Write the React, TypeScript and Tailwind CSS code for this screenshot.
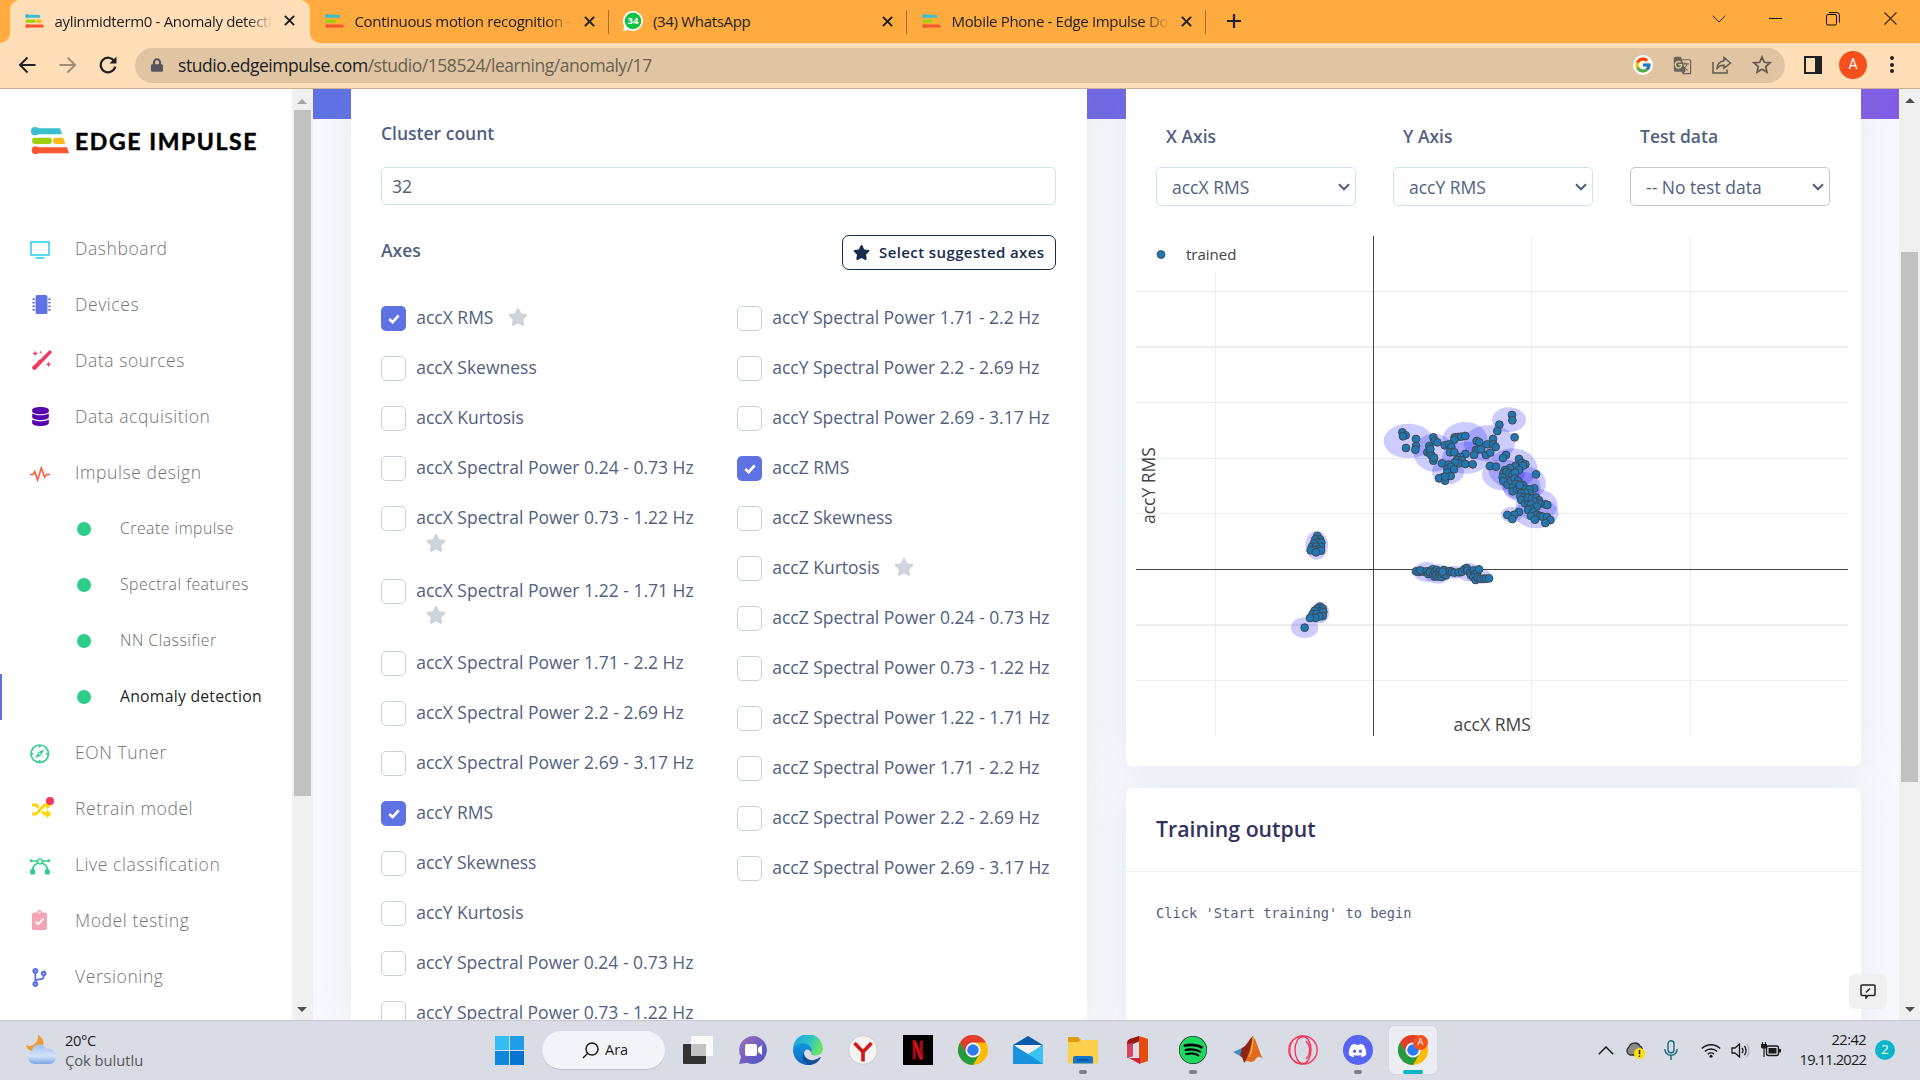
import React from "react";
import {
  FaMicrochip, FaDatabase, FaRandom, FaCodeBranch, FaStar, FaSpotify, FaDiscord, FaLock,
} from "react-icons/fa";
import { MdGTranslate } from "react-icons/md";
import { FcGoogle } from "react-icons/fc";

const Logo = ({ className }: { className: string }) => (
  <svg viewBox="0 0 38 26" className={className} preserveAspectRatio="none">
    <path d="M4 0C6 0 7 1.2 8 1.2H29L31 7H8C7 7 6 8 4 8A4 4 0 0 1 4 0Z" fill="#3bbfd0" />
    <rect x="1" y="10.3" width="20" height="6" rx="3" fill="#9fd00c" />
    <path d="M25 10.3H32L34.5 16.3H25A3 3 0 0 1 25 10.3Z" fill="#fdb913" />
    <path d="M4 18.5C6 18.5 7 19.5 8 19.5H36L38 25.3H8C7 25.3 6 26.2 4 26.2A3.9 3.9 0 0 1 4 18.5Z" fill="#fb5530" />
  </svg>
);

const Close = () => (
  <svg viewBox="0 0 10 10" className="size-[11px] shrink-0"><path d="M.8.8 9.2 9.2M9.2.8.8 9.2" stroke="#202124" strokeWidth="1.9" /></svg>
);

function Tab({ icon, title, fade }: { icon: React.ReactNode; title: string; fade: string }) {
  return (
    <div className="flex h-[41px] w-[297.5px] shrink-0 items-center pl-[14px] pr-[13px]">
      <div className="flex w-5 shrink-0 justify-center">{icon}</div>
      <div className={"ml-[10.500px] flex-1 whitespace-nowrap text-[15px] leading-5 tracking-[-0.33px] text-[#202124] " + fade}>{title}</div>
      <div className="ml-[11px]"><Close /></div>
    </div>
  );
}

const FADE = "[mask-image:linear-gradient(to_right,black_88%,transparent)]";

function Browser() {
  const fav = <Logo className="h-[14px] w-[19px]" />;
  return (
    <header className="h-[89px] shrink-0 border-b border-[#c9b195] bg-[#ffdeb8] font-['Open_Sans',sans-serif]">
      <div className="flex h-[43px] bg-[#ffab40]">
        <div className="flex h-[43px] w-[10px] items-end bg-[#ffdeb8]"><div className="h-[43px] w-[10px] rounded-br-[10px] bg-[#ffab40]" /></div>
        <div className="w-[300px] rounded-t-[10px] bg-[#ffdeb8]">
          <Tab icon={fav} title="aylinmidterm0 - Anomaly detecti" fade={FADE} />
        </div>
        <div className="h-[43px] w-[10px] bg-[#ffdeb8]"><div className="h-[43px] w-[10px] rounded-bl-[10px] bg-[#ffab40]" /></div>
        <div className="-ml-[10px] flex h-[42px] items-center">
          <Tab icon={fav} title="Continuous motion recognition -" fade={FADE} />
          <div className="mt-px h-6 w-px bg-[#a6722f]" />
          <Tab
            icon={
              <svg viewBox="0 0 20 20" className="size-5"><path d="M10 0a10 10 0 1 1-4.5 19L0 20l1.3-5A10 10 0 0 1 10 0Z" fill="#fff" /><circle cx="10" cy="10" r="8.3" fill="#0dc143" /><text x="10" y="13.4" fontSize="9.5" fontWeight="700" textAnchor="middle" fill="#fff">34</text></svg>
            }
            title="(34) WhatsApp"
            fade=""
          />
          <div className="mt-px h-6 w-px bg-[#a6722f]" />
          <Tab icon={fav} title="Mobile Phone - Edge Impulse Do" fade={FADE} />
          <div className="mt-px h-6 w-px bg-[#a6722f]" />
          <svg viewBox="0 0 16 16" className="ml-[20px] size-4"><path d="M8 1V15M1 8H15" stroke="#202124" strokeWidth="2.2" /></svg>
        </div>
        <div className="ml-auto flex h-[37px] items-center">
          <svg viewBox="0 0 14 8" className="mr-[43px] h-2 w-[14px]"><path d="M.7.7 7 7 13.3.7" fill="none" stroke="#3b2708" strokeWidth="1" /></svg>
          <div className="mr-[44px] h-px w-[13px] bg-black" />
          <svg viewBox="0 0 14 14" className="mr-[44px] size-[14px]" fill="none" stroke="#111"><rect x=".5" y="2.5" width="10" height="10.5" rx="1.5" /><path d="M3 .6H11Q13.4.6 13.4 3V10.5" /></svg>
          <svg viewBox="0 0 13 13" className="mr-[23px] size-[13px]"><path d="M.5.5 12.5 12.5M12.5.5.5 12.5" stroke="#3b2708" strokeWidth="1.1" /></svg>
        </div>
      </div>
      <div className="-mt-px flex h-[45px] items-center">
        <svg viewBox="0 0 18 18" className="ml-[18px] size-[18px]" fill="none" stroke="#202124" strokeWidth="2"><path d="M17.500 9H2M9.500 1.500 2 9l7.500 7.500" /></svg>
        <svg viewBox="0 0 18 18" className="ml-[23px] size-[18px]" fill="none" stroke="#a08c78" strokeWidth="2"><path d="M.5 9H16M8.500 1.500 16 9l-7.500 7.500" /></svg>
        <svg viewBox="0 0 18 18" className="ml-[22px] size-[18px]" fill="none" stroke="#202124" strokeWidth="2.2"><path d="M15.300 5.200A7.300 7.300 0 1 0 16.200 10.500" /><path d="M17.500.5V7.500H10.500Z" fill="#202124" stroke="none" /></svg>
        <div className="ml-[18px] mt-px flex h-[35px] w-[1650px] items-center rounded-full bg-[#dfc5a2] pl-4 pr-[13px]">
          <FaLock className="h-[14px] w-[12px] text-[#54565a]" />
          <div className="ml-[15px] whitespace-nowrap text-[17.500px] leading-6 tracking-[-0.46px] text-[#202124]">
            studio.edgeimpulse.com<span className="text-[#6b5f51]">/studio/158524/learning/anomaly/17</span>
          </div>
          <div className="ml-auto flex size-5 items-center justify-center rounded-full bg-white"><FcGoogle className="size-[18px]" /></div>
          <MdGTranslate className="ml-5 size-[19px] text-[#6b6458]" />
          <svg viewBox="0 0 20 18" className="ml-5 h-[18px] w-5" fill="none" stroke="#5f5a52" strokeWidth="1.500"><path d="M1 6V17H15V13.500" /><path d="M12 1.500 18.500 7 12 12.200V9.300C8.500 9.200 6.500 10.300 4.800 13 5.200 8.500 7.500 5.300 12 4.700Z" /></svg>
          <svg viewBox="0 0 20 20" className="ml-5 size-5" fill="none" stroke="#5f5a52" strokeWidth="1.700"><path d="M10 2 12.300 7.300 18 7.800 13.700 11.600 15 17.200 10 14.300 5 17.200 6.300 11.600 2 7.800 7.700 7.300Z" /></svg>
        </div>
        <div className="ml-[19px] flex h-[18px] w-[18px] border-2 border-r-[7px] border-[#202124]" />
        <div className="ml-[17px] flex size-7 items-center justify-center rounded-full bg-[#f6511d] font-['Roboto'] text-[14px] text-white">A</div>
        <div className="ml-[23px] flex flex-col gap-[2.500px]"><i className="size-1 rounded-full bg-[#202124]" /><i className="size-1 rounded-full bg-[#202124]" /><i className="size-1 rounded-full bg-[#202124]" /></div>
      </div>
    </header>
  );
}

const Pulse = () => (
  <svg viewBox="0 0 20 16" className="h-4 w-5 translate-y-[2px]" fill="none" stroke="#fb6340" strokeWidth="1.700"><path d="M0 8.500H3L4.800 5.500 7.500 14 11.300 2 14.500 11 16.500 8.500H20" /></svg>
);
const items: { icon?: React.ReactNode; label: string; active?: boolean }[] = [
  { icon: <svg viewBox="0 0 20 18" className="h-[18px] w-5 translate-y-[2px]" fill="none" stroke="#11cdef" strokeWidth="1.400"><rect x="1" y="1" width="18" height="13" /><path d="M5.500 17H14.500" /></svg>, label: "Dashboard" },
  { icon: <FaMicrochip className="ml-[2px] size-[19px] text-[#5e72e4]" />, label: "Devices" },
  { icon: <svg viewBox="0 0 20 20" className="ml-[2px] size-5" fill="#f5365c"><path d="M17.800 0 20 2.200 3.800 19.500Q2.500 20.500 1 19.300T.5 16.500L5.500 12 6 10.500 8 9.800Z" /><path d="M3.200.7 4 2.700 6.300 3.500 4 4.300 3.200 6.300 2.400 4.300.2 3.500 2.400 2.700ZM8.700.7 9.100 1.700 10.200 2.200 9.100 2.700 8.700 3.700 8.200 2.700 7.200 2.200 8.200 1.700ZM16.500 11.500 17.300 13.500 19.500 14.300 17.300 15.100 16.500 17.200 15.700 15.100 13.500 14.300 15.700 13.500Z" /></svg>, label: "Data sources" },
  { icon: <FaDatabase className="ml-[1px] size-[19px] text-[#5603ad]" />, label: "Data acquisition" },
  { icon: <Pulse />, label: "Impulse design" },
  { label: "Create impulse" },
  { label: "Spectral features" },
  { label: "NN Classifier" },
  { label: "Anomaly detection", active: true },
  { icon: <svg viewBox="0 0 20 20" className="size-[19.500px] translate-y-[2px]" fill="none" stroke="#2dce89" strokeWidth="1.700"><circle cx="10" cy="10" r="9" /><path d="M14.500 5.500 11.500 11.500 5.500 14.500 8.500 8.500Z" fill="#2dce89" stroke="none" /><path d="M10 1V3.500M10 16.500V19M1 10H3.500M16.500 10H19" /><circle cx="10" cy="10" r="1" fill="#fff" stroke="none" /></svg>, label: "EON Tuner" },
  { icon: <div className="relative ml-[2px]"><FaRandom className="size-[19px] translate-y-px text-[#ffd600]" /><i className="absolute -right-[3px] -top-[2px] size-2 rounded-full bg-[#f5365c]" /></div>, label: "Retrain model" },
  { icon: <svg viewBox="0 0 20 17" className="h-[17px] w-5 translate-y-[2px]" fill="none" stroke="#2dce89" strokeWidth="1.400"><path d="M1 3H7M13 3H19" /><circle cx="10" cy="3.500" r="2.400" /><path d="M7.800 5C4.500 6.500 2.800 8.500 2.700 12M12.200 5C15.500 6.500 17.200 8.500 17.300 12" strokeWidth="1.700" /><path d="M.3 11.500H5V16.500H.3ZM15 11.500H19.700V16.500H15ZM0 1.500H2V4H0ZM18 1.500H20V4H18Z" fill="#2dce89" stroke="none" /></svg>, label: "Live classification" },
  { icon: <svg viewBox="0 0 384 512" className="ml-[2px] h-5 w-[15px]" fill="#f3a4b5"><path d="M336 64h-80c0-35-29-64-64-64s-64 29-64 64H48C21.500 64 0 85.500 0 112v352c0 26.500 21.500 48 48 48h288c26.500 0 48-21.500 48-48V112c0-26.500-21.500-48-48-48z" /><circle cx="192" cy="64" r="24" fill="#fff" /><path d="M90 290 160 360 296 222" stroke="#fff" strokeWidth="48" fill="none" /></svg>, label: "Model testing" },
  { icon: <FaCodeBranch className="size-[19px] translate-y-px text-[#5e72e4]" />, label: "Versioning" },
];

const Up = ({ c }: { c: string }) => <svg viewBox="0 0 10 5" className="h-[5px] w-[10px]"><path d="M5 0 10 5H0Z" fill={c} /></svg>;
const Down = () => <svg viewBox="0 0 10 5" className="h-[5px] w-[10px]"><path d="M5 5 10 0H0Z" fill="#505050" /></svg>;

function Sidebar() {
  return (
    <aside className="flex h-full w-[313px] shrink-0 bg-white">
      <nav className="w-[292px]">
        <div className="flex h-[131px] items-start pl-[31px] pt-[38px]">
          <Logo className="h-[27px] w-[38px]" />
          <div className="ml-[6px] whitespace-nowrap pt-px font-['Lato'] text-[23px] font-bold leading-[26px] tracking-[1.6px] text-black [-webkit-text-stroke:0.5px_black]">EDGE IMPULSE</div>
        </div>
        {items.map((it) => (
          <div key={it.label} className="flex h-14 items-center">
            <i className={it.active ? "h-[46px] w-[2px] translate-y-px bg-[#5e72e4]" : "w-[2px]"} />
            {it.icon ? (
              <>
                <div className="ml-7 flex w-[45px] items-center">{it.icon}</div>
                <span className="whitespace-nowrap text-[17.500px] font-light tracking-[0.59px] text-[#737373]">{it.label}</span>
              </>
            ) : (
              <>
                <i className="ml-[75px] mr-[29px] size-[14px] translate-y-px rounded-full bg-[#2dce89]" />
                <span className={it.active ? "translate-y-px whitespace-nowrap text-[15.750px] tracking-[0.25px] text-black/90" : "translate-y-px whitespace-nowrap text-[15.750px] font-light tracking-[0.52px] text-[#6a6a6a]"}>{it.label}</span>
              </>
            )}
          </div>
        ))}
      </nav>
      <div className="flex w-[21px] flex-col items-center bg-[#f0f0f0] pr-px">
        <div className="flex h-[21px] items-center pt-[3px]"><Up c="#a3a3a3" /></div>
        <div className="h-[686px] w-[17px] bg-[#c1c1c1]" />
        <div className="mt-auto flex h-[21px] items-center"><Down /></div>
      </div>
    </aside>
  );
}

type Ax = { t: string; on?: boolean; star?: "in" | "wrap" };
const col1: Ax[] = [
  { t: "accX RMS", on: true, star: "in" }, { t: "accX Skewness" }, { t: "accX Kurtosis" }, { t: "accX Spectral Power 0.24 - 0.73 Hz" },
  { t: "accX Spectral Power 0.73 - 1.22 Hz", star: "wrap" }, { t: "accX Spectral Power 1.22 - 1.71 Hz", star: "wrap" },
  { t: "accX Spectral Power 1.71 - 2.2 Hz" }, { t: "accX Spectral Power 2.2 - 2.69 Hz" }, { t: "accX Spectral Power 2.69 - 3.17 Hz" },
  { t: "accY RMS", on: true }, { t: "accY Skewness" }, { t: "accY Kurtosis" }, { t: "accY Spectral Power 0.24 - 0.73 Hz" }, { t: "accY Spectral Power 0.73 - 1.22 Hz" },
];
const col2: Ax[] = [
  { t: "accY Spectral Power 1.71 - 2.2 Hz" }, { t: "accY Spectral Power 2.2 - 2.69 Hz" }, { t: "accY Spectral Power 2.69 - 3.17 Hz" },
  { t: "accZ RMS", on: true }, { t: "accZ Skewness" }, { t: "accZ Kurtosis", star: "in" }, { t: "accZ Spectral Power 0.24 - 0.73 Hz" },
  { t: "accZ Spectral Power 0.73 - 1.22 Hz" }, { t: "accZ Spectral Power 1.22 - 1.71 Hz" }, { t: "accZ Spectral Power 1.71 - 2.2 Hz" },
  { t: "accZ Spectral Power 2.2 - 2.69 Hz" }, { t: "accZ Spectral Power 2.69 - 3.17 Hz" },
];

function AxisRow({ a }: { a: Ax }) {
  return (
    <div className={a.star === "wrap" ? "flex h-[72.500px]" : "flex h-[50px]"}>
      {a.on ? (
        <div className="flex size-[25px] shrink-0 items-center justify-center rounded-[5px] bg-[#5e72e4]">
          <svg viewBox="0 0 12 10" className="ml-px h-[10px] w-3"><path d="M1.300 5 4.600 8.200 10.700 1.300" fill="none" stroke="#fff" strokeWidth="2.600" /></svg>
        </div>
      ) : (
        <div className="size-[25px] shrink-0 rounded-[5px] border border-[#cad1d7] bg-white" />
      )}
      <div className="ml-[10.200px] -mt-px whitespace-nowrap text-[17.500px] leading-[25px]">
        {a.t}
        {a.star === "in" && <FaStar className="-mt-[4px] ml-[14.500px] inline size-5 text-[#ced4da]" />}
        {a.star === "wrap" && <FaStar className="ml-[9.500px] mt-[2.500px] size-5 text-[#ced4da]" />}
      </div>
    </div>
  );
}

function SettingsCard() {
  return (
    <section className="h-full w-[736px] shrink-0 bg-white pl-[30.500px] shadow-[0_0_40px_rgba(136,152,170,0.15)]">
      <div className="h-[78px] pt-[31px] text-[17.500px] font-semibold leading-[26px]">Cluster count</div>
      <div className="flex h-[38px] w-[675px] items-center rounded-[5px] border border-[#cbe5ef] pl-[10px] text-[17.500px]">32</div>
      <div className="mt-[30px] flex h-[35px] w-[675px] items-center justify-between">
        <span className="-mt-1 text-[17.500px] font-semibold">Axes</span>
        <div className="flex h-[35px] w-[214px] items-center rounded-[7px] border border-[#172b4d] pl-[10px] text-[15px] font-semibold tracking-[0.4px] text-[#172b4d]">
          <FaStar className="mr-[9px] size-[17px]" />
          <span className="whitespace-nowrap">Select suggested axes</span>
        </div>
      </div>
      <div className="mt-9 flex">
        <div className="w-[356px]">{col1.map((a) => <AxisRow key={a.t} a={a} />)}</div>
        <div>{col2.map((a) => <AxisRow key={a.t} a={a} />)}</div>
      </div>
    </section>
  );
}

function Select({ label, value, border }: { label: string; value: string; border: string }) {
  return (
    <div className="w-[200px]">
      <div className="h-[78px] pl-[10px] pt-[34px] text-[17.500px] font-semibold leading-[26px]">{label}</div>
      <div className={"flex h-[39px] items-center justify-between rounded-[5px] border pl-[15px] pr-[5px] pt-[2px] text-[17.500px] " + border}>
        <span>{value}</span>
        <svg viewBox="0 0 12 8" className="-mt-px h-2 w-3"><path d="M1 1.300 6 6.300 11 1.300" fill="none" stroke="#525f7f" strokeWidth="2" /></svg>
      </div>
    </div>
  );
}

/* Scatter data in plot units (three units per pixel). */
const clusters = [
  [205, 153, 74, 52], [282, 188, 61, 57], [375, 150, 68, 54], [378, 203, 72, 48], [448, 160, 77, 55], [507, 89, 51, 37], [324, 246, 48, 37],
  [518, 235, 74, 60], [490, 254, 64, 47], [551, 280, 67, 52], [545, 290, 57, 45], [590, 345, 63, 48], [590, 370, 66, 45], [515, 374, 32, 24],
  [260, 546, 40, 30], [292, 552, 40, 29], [345, 547, 30, 20], [388, 547, 35, 28], [425, 560, 30, 22],
  [-70, 466, 34, 43], [-60, 668, 28, 32], [-106, 713, 41, 31],
];
const pts: number[][] = [
  [516, 75], [517, 91], [478, 104], [472, 123], [524, 142], [187, 127], [197, 136], [189, 139], [228, 147], [228, 168], [226, 179], [198, 174],
  [280, 142], [284, 152], [292, 157], [268, 168], [262, 187], [270, 188], [274, 196], [280, 212], [282, 203], [271, 177], [314, 166], [326, 163], [334, 171], [330, 187], [343, 187],
  [344, 142], [354, 141], [364, 140], [376, 138], [343, 149], [376, 192], [361, 201], [351, 210], [366, 211], [357, 220], [376, 222], [398, 223], [344, 218], [306, 220], [326, 224], [322, 236], [334, 230], [342, 238], [322, 248], [332, 258], [308, 262], [297, 265], [315, 272], [315, 260],
  [410, 153], [418, 157], [408, 180], [402, 195], [415, 178], [423, 178], [442, 163], [459, 147], [460, 163], [467, 171], [438, 195], [451, 188], [498, 195], [489, 204], [450, 228], [468, 230],
  [537, 207], [545, 218], [556, 223], [549, 227], [526, 228], [537, 240], [510, 234], [495, 240], [490, 250], [499, 246], [508, 250], [517, 254], [525, 248], [488, 262], [490, 273], [503, 284], [513, 272], [524, 266], [534, 272], [527, 282], [518, 293], [518, 304], [531, 299], [541, 296], [549, 285], [558, 296], [539, 285], [588, 253], [583, 295], [568, 298], [569, 310], [555, 308], [543, 310], [541, 319], [553, 322], [544, 330], [555, 340], [565, 334], [564, 323], [575, 326], [588, 322], [597, 331], [585, 335], [573, 343], [599, 341], [616, 343], [622, 345], [590, 350], [573, 357], [564, 360], [580, 366], [591, 374], [600, 378], [573, 378], [585, 389], [608, 380], [621, 381], [631, 390], [616, 399], [537, 366], [523, 374], [502, 375], [517, 387],
  [228, 544], [236, 546], [250, 545], [241, 541], [260, 544], [265, 552], [272, 542], [278, 538], [270, 547], [280, 553], [284, 560], [285, 545], [290, 540], [292, 550], [288, 556], [296, 560], [299, 545], [301, 554], [305, 561], [310, 552], [318, 556], [322, 544], [312, 540], [308, 545], [330, 543], [336, 546], [343, 548], [356, 547], [366, 545], [373, 538], [380, 534], [382, 541], [390, 548], [393, 556], [401, 541], [404, 553], [411, 550], [417, 538], [400, 562], [407, 570], [413, 562], [421, 566], [431, 566], [438, 566], [447, 565],
  [-68, 438], [-60, 448], [-74, 448], [-66, 456], [-56, 458], [-78, 460], [-84, 470], [-57, 470], [-72, 470], [-64, 478], [-78, 480], [-57, 482], [-88, 481], [-72, 487],
  [-60, 650], [-68, 656], [-52, 656], [-60, 664], [-50, 666], [-76, 662], [-82, 672], [-70, 672], [-52, 678], [-62, 680], [-74, 684], [-90, 684], [-106, 713],
];

function Plot() {
  return (
    <svg viewBox="1126 236 735 500" className="mt-[30px] h-[500px] w-[735px]" fontFamily="Open Sans">
      <g stroke="#eeeeee" strokeWidth="1">
        {[1215.5, 1531.5, 1690.5].map((x) => <path key={x} d={`M${x} ${x === 1215.5 ? 272 : 236}V736`} />)}
        {[291.5, 402.5, 458.5, 513.5, 680.5].map((y) => <path key={y} d={`M1136 ${y}H1848`} />)}
        <path d="M1136 347H1848M1136 625H1848" strokeWidth="2" />
      </g>
      <path d="M1373.500 236V736M1136 569.500H1848" stroke="#444" />
      <g transform="translate(1340 390) scale(.33333)">
        {clusters.map((c, i) => <ellipse key={i} cx={c[0]} cy={c[1]} rx={c[2]} ry={c[3]} fill="#00f" fillOpacity=".2" />)}
        {pts.map((p, i) => <circle key={i} cx={p[0]} cy={p[1]} r="11.700" fill="#1f77b4" stroke="#444" strokeWidth="2.800" />)}
      </g>
      <circle cx="1161" cy="254.500" r="4" fill="#1f77b4" stroke="#444" strokeWidth=".8" />
      <g fill="#444">
        <text x="1186" y="260" fontSize="15">trained</text>
        <text x="1453.500" y="730.500" fontSize="17.500">accX RMS</text>
        <text transform="translate(1155 524) rotate(-90)" fontSize="17.500">accY RMS</text>
      </g>
    </svg>
  );
}

function Results() {
  return (
    <div className="ml-[39px] flex h-full w-[735px] flex-col">
      <section className="h-[677px] shrink-0 rounded-b-[7px] bg-white shadow-[0_0_40px_rgba(136,152,170,0.15)]">
        <div className="flex gap-[37px] pl-[30.500px]">
          <Select label="X Axis" value="accX RMS" border="border-[#cbe5ef]" />
          <Select label="Y Axis" value="accY RMS" border="border-[#cbe5ef]" />
          <Select label="Test data" value="-- No test data" border="border-[#c4c8cd]" />
        </div>
        <div className="pl-[0.5px]"><Plot /></div>
      </section>
      <section className="mt-[22px] h-[300px] shrink-0 rounded-t-[7px] bg-white shadow-[0_0_40px_rgba(136,152,170,0.15)]">
        <h3 className="flex h-[84px] items-center border-b border-[#f0f1f3] pb-[2px] pl-[30.500px] text-[21.250px] font-semibold text-[#32325d]">Training output</h3>
        <pre className="pl-[30.500px] pt-[31px] font-['DejaVu_Sans_Mono',monospace] text-[13.700px] leading-5">Click 'Start training' to begin</pre>
      </section>
    </div>
  );
}

const Chrome = () => (
  <svg viewBox="0 0 48 48" className="size-[30px]">
    <circle cx="24" cy="24" r="24" fill="#fbbc05" />
    <path d="M24 24 13 30 3.200 12A24 24 0 0 1 44.800 12H24Z" fill="#e23c2e" />
    <path d="M3.200 12A24 24 0 0 0 24 48L34.400 30 24 35 13.600 30Z" fill="#249a41" />
    <circle cx="24" cy="24" r="12" fill="#fff" /><circle cx="24" cy="24" r="9.300" fill="#2d7cf0" />
  </svg>
);

const apps: { n: string; dot?: boolean; el: React.ReactNode }[] = [
  { n: "tasks", el: <svg viewBox="0 0 30 28" className="h-7 w-[30px]"><rect y="8" width="23" height="20" rx="1" fill="#333" /><rect x="8" width="22" height="20" rx="1" fill="#fafafa" /><rect x="8" y="8" width="15" height="12" fill="#c3c3c3" /></svg> },
  { n: "chat", el: <svg viewBox="0 0 30 30" className="size-[30px]"><defs><linearGradient id="ch" x1="0" y1="0" x2="1" y2="1"><stop stopColor="#9b72b8" /><stop offset="1" stopColor="#4a50c8" /></linearGradient></defs><path d="M15 1A14 14 0 1 1 9 27.700L1 29 3 22A14 14 0 0 1 15 1Z" fill="url(#ch)" /><rect x="7" y="9" width="12" height="12" rx="2" fill="#fff" /><path d="M20 13 24 10V20L20 17Z" fill="#fff" /></svg> },
  { n: "edge", el: <svg viewBox="0 0 30 30" className="size-[30px]"><defs><linearGradient id="eg" x1="0" y1="0" x2="1" y2=".3"><stop stopColor="#1fa0e0" /><stop offset=".6" stopColor="#2cc3c8" /><stop offset="1" stopColor="#6be36a" /></linearGradient><linearGradient id="eb" x1="0" y1="0" x2="0" y2="1"><stop stopColor="#1595dd" /><stop offset="1" stopColor="#0b68c6" /></linearGradient></defs><path d="M0 15A15 15 0 0 1 30 13C30 18 26.500 20.500 22 20.500 18.500 20.500 17.500 19 18.200 17.500 19.500 15 17 11.500 13 11.500 7 11.500 2 14 0 15Z" fill="url(#eg)" /><path d="M0 15C1 9.500 7 7.500 12 8.500 17 9.500 19.500 13 18.300 17.500 15 11.500 10 15 11 21 12 26 16 28 19 29.500A15 15 0 0 1 0 15Z" fill="url(#eb)" /><path d="M11 18C11 23 17 26 21 25 24 24.300 26 22.500 28 22 26 27 21 30 16 30 10 28 8 22 11 18Z" fill="#114f97" /></svg> },
  { n: "yandex", el: <svg viewBox="0 0 30 30" className="size-[30px]"><circle cx="15" cy="15" r="14.300" fill="#f5f4f3" stroke="#c9c6c4" strokeWidth=".8" /><path d="M6.500 8 15 17 23.500 8M15 16V26.500" fill="none" stroke="#d7141a" strokeWidth="3.600" /></svg> },
  { n: "netflix", el: <svg viewBox="0 0 30 30" className="size-[30px]"><rect width="30" height="30" fill="#000" /><path d="M11.200 5.500V24.500M18.400 5.500V24.500" stroke="#a50a10" strokeWidth="3" /><path d="M9.700 5.500H12.800L19.900 24.500H16.800Z" fill="#e50914" /></svg> },
  { n: "chrome", el: <Chrome /> },
  { n: "mail", el: <svg viewBox="0 0 30 28" className="h-7 w-[30px]"><path d="M0 9 15 0 30 9Z" fill="#0a5aa8" /><path d="M0 9H30V28H0Z" fill="#1f9be2" /><path d="M1 9H29L15 20Z" fill="#f3f3f3" /><path d="M0 9 15 18 30 28H0Z" fill="#1b93dc" /><path d="M30 9 15 18 30 28Z" fill="#3bc3f3" /></svg> },
  { n: "files", dot: true, el: <svg viewBox="0 0 30 27" className="h-[27px] w-[30px]"><path d="M0 1Q0 0 1 0H10L13 3V8H0Z" fill="#dc9c0c" /><path d="M0 5H10L13 3H29Q30 3 30 4V25Q30 26.500 29 26.500H1Q0 26.500 0 25Z" fill="#fdcf4b" /><path d="M5 26.500V21Q5 19 7 19H23Q25 19 25 21V26.500Z" fill="#1276c8" /><path d="M9 23H21" stroke="#0a4f96" strokeWidth="1.500" /></svg> },
  { n: "office", el: <svg viewBox="0 0 24 28" className="h-7 w-6"><path d="M13 0 22 3V25L13 28Z" fill="#e64a0e" /><path d="M13 0V5.500L7 8V20L1 22V7Q1 4 3.500 3Z" fill="#9c1713" /><path d="M1 8 7 7V20L1 22Z" fill="#d6455f" /><path d="M3 22H14V28Z" fill="#d21f3c" /></svg> },
  { n: "spotify", dot: true, el: <div className="rounded-full bg-black"><FaSpotify className="size-7 text-[#1ed760]" /></div> },
  { n: "matlab", el: <svg viewBox="0 0 30 28" className="h-7 w-[30px]"><path d="M0 16 9 12 13 16 7 20Z" fill="#3c8fc7" /><path d="M9 12C14 10 16 3 20 0L19 16 11 27C10 22 9 21 7 20Z" fill="#8a2516" /><path d="M20 0C24 5 26 16 30 23 26 19 24 21 22 24 18 29 15 22 11 27 16 20 18 10 20 0Z" fill="#e26a1c" /><path d="M20 1C20 9 19 15 16 21" stroke="#fbb13c" strokeWidth="1.300" fill="none" /></svg> },
  { n: "opera", el: <svg viewBox="0 0 30 30" className="size-[30px]" fill="none" stroke="#fa2e55"><circle cx="15" cy="15" r="14.200" strokeWidth="1.300" /><ellipse cx="15" cy="15" rx="8" ry="13.500" strokeWidth="1.300" /><path d="M13 1C5 3 2 8 2 15S5 27 13 29" strokeWidth="1" /><path d="M18 6C23 11 23 19 18 24" strokeWidth="1.500" /></svg> },
  { n: "discord", dot: true, el: <div className="flex size-[30px] items-center justify-center rounded-full bg-[#5865f2]"><FaDiscord className="size-[19px] text-white" /></div> },
];

function Taskbar() {
  return (
    <footer className="flex h-[60px] shrink-0 items-center border-t border-[#c6c7d2] bg-[#d9dbe5] pb-[1px] font-['Open_Sans',sans-serif] text-[#1b1b1b]">
      <div className="flex w-[482px] items-center pl-[26px]">
        <svg viewBox="0 0 30 30" className="size-[30px]"><defs><linearGradient id="cl" x1="0" y1="0" x2="0" y2="1"><stop stopColor="#a4c1f2" /><stop offset=".6" stopColor="#d3e2fa" /><stop offset="1" stopColor="#7ba4e6" /></linearGradient></defs><path d="M12 0C19 4 20 13 11 16 6 17 1 15 0 10 6 13 13 8 12 0Z" fill="#f09a28" /><path d="M8 29A7.500 7 0 0 1 6 16C7 8 17 7 20 14 26 12 30 17 30 21 30 26 27 29 23 29Z" fill="url(#cl)" /></svg>
        <div className="ml-[9px] text-[14.700px] leading-5 tracking-[-0.4px]">20°C<div className="tracking-[0px] text-[#55565c]">Çok bulutlu</div></div>
      </div>
      <div className="flex w-[60px] pl-[13px]">
        <div className="grid size-[29px] grid-cols-2 gap-px"><i className="bg-[#35bdf5]" /><i className="bg-[#1f9de8]" /><i className="bg-[#0f87dc]" /><i className="bg-[#0675d2]" /></div>
      </div>
      <div className="flex h-[38px] w-[123px] items-center justify-center rounded-full bg-[#f3f4f9] pl-[3px] text-[14.500px] tracking-[-0.1px] shadow-[0_1px_1px_rgba(0,0,0,0.12)]">
        <svg viewBox="0 0 17 17" className="mr-[6px] size-[17px]" fill="none" stroke="#1b1b1b" strokeWidth="1.500"><circle cx="10" cy="7" r="6" /><path d="M5.500 11.500 1 16" /></svg>Ara
      </div>
      <div className="ml-[5px] flex">
        {apps.map((a) => (
          <div key={a.n} className="relative flex h-12 w-[55px] items-center justify-center">
            {a.el}
            {a.dot && <i className="absolute bottom-0 h-1 w-2 rounded-full bg-[#7d7e86]" />}
          </div>
        ))}
        <div className="relative ml-1 flex size-12 items-center justify-center rounded-[5px] bg-[#ecedf3] shadow-[0_0_1px_rgba(0,0,0,0.2)]">
          <Chrome />
          <i className="absolute right-[9px] top-[9px] flex size-[15px] items-center justify-center rounded-full bg-[#f6511d] font-['Roboto'] text-[9px] not-italic text-white">A</i>
          <i className="absolute bottom-0 h-1 w-5 rounded-full bg-[#0ab6c6]" />
        </div>
      </div>
      <div className="ml-auto flex items-center">
        <svg viewBox="0 0 16 9" className="h-[9px] w-4" fill="none" stroke="#1b1b1b" strokeWidth="1.500"><path d="M.8 8.200 8 1 15.200 8.200" /></svg>
        <svg viewBox="0 0 20 18" className="ml-[11px] h-[18px] w-5"><path d="M5 14A4.500 4.500 0 0 1 4 6C5 2 12 0 15 5 18 6 18 9 17 14Z" fill="#8c8c8c" stroke="#333" strokeWidth="1.300" /><circle cx="14.500" cy="12.500" r="5.500" fill="#ffe000" /><path d="M14.500 9V13.300M14.500 14.500V16" stroke="#222" strokeWidth="1.500" /></svg>
        <svg viewBox="0 0 14 20" className="ml-[19px] h-5 w-[14px]" fill="none" stroke="#176b78" strokeWidth="1.400"><rect x="4" y=".8" width="6" height="12" rx="3" /><path d="M.8 9A6.200 6.200 0 0 0 13.200 9M7 15.500V20" /></svg>
        <svg viewBox="0 0 20 15" className="ml-[23px] h-[15px] w-5" fill="none" stroke="#1b1b1b" strokeWidth="1.400"><path d="M.8 5.500A13 13 0 0 1 19.200 5.500M3.800 8.500A8.800 8.800 0 0 1 16.200 8.500M6.800 11.300A4.600 4.600 0 0 1 13.200 11.300" /><circle cx="10" cy="13.300" r="1.500" fill="#1b1b1b" stroke="none" /></svg>
        <svg viewBox="0 0 20 15" className="ml-[10px] h-[15px] w-5" fill="none" stroke="#1b1b1b" strokeWidth="1.300"><path d="M1 5H4L8.500 1V14L4 10H1Z" /><path d="M11 4.800Q13 7.500 11 10.200M13.500 2.800Q16.500 7.500 13.500 12.200" /><path d="M16 1Q20 7.500 16 14" stroke="#aaacb5" /></svg>
        <svg viewBox="0 0 20 16" className="ml-[10px] h-4 w-5"><rect x="5.500" y="4" width="12" height="9.500" rx="2" fill="none" stroke="#1b1b1b" strokeWidth="1.400" /><rect x="7.500" y="6" width="8" height="5.500" fill="#1b1b1b" /><path d="M18 7H20V10.500H18Z" fill="#1b1b1b" /><path d="M0 2H6V5Q6 6.500 3 6.500T0 5ZM1 0H2V2H1ZM4 0H5V2H4ZM2.400 6H3.600V15H2.400Z" fill="#1b1b1b" /></svg>
        <div className="ml-[13px] w-[72px] -translate-y-px whitespace-nowrap text-right text-[14.700px] leading-5 tracking-[-0.85px]"><span className="tracking-[-0.6px]">22:42</span><br /><span className="-ml-2">19.11.2022</span></div>
        <div className="ml-[9px] mr-[25px] flex size-5 items-center justify-center rounded-full bg-[#0ab6c6] text-[13px] text-white">2</div>
      </div>
    </footer>
  );
}

export default function App() {
  return (
    <div className="flex h-[1080px] w-[1920px] flex-col overflow-hidden bg-white">
      <Browser />
      <main className="flex h-[931px] shrink-0 overflow-hidden font-['Open_Sans',sans-serif] text-[#525f7f]">
        <Sidebar />
        <div className="relative h-full w-[1586px] overflow-hidden bg-[linear-gradient(87deg,#5e72e4,#825ee4)]">
          <div className="flex h-full bg-[linear-gradient(transparent_30px,#f8f9fe_30px)] pl-[37.500px]">
            <SettingsCard />
            <Results />
          </div>
          <div className="absolute bottom-[11px] right-[12px] flex h-[35px] w-[38px] items-center justify-center rounded-[6px] bg-[#f0f0f0]">
            <svg viewBox="0 0 16 15" className="h-[15px] w-4" fill="none" stroke="#222" strokeWidth="1.500"><path d="M2 1H14Q15 1 15 2V10.500Q15 11.500 14 11.500H8L6 14V11.500H2Q1 11.500 1 10.500V2Q1 1 2 1Z" /><path d="M6 8.500 10 4.500" /></svg>
          </div>
        </div>
        <div className="flex w-[21px] flex-col items-center bg-[#f0f0f0]">
          <div className="flex h-[163px] items-start pt-[9px]"><Up c="#505050" /></div>
          <div className="h-[530px] w-[17px] bg-[#c1c1c1]" />
          <div className="mt-auto flex h-[21px] items-center"><Down /></div>
        </div>
      </main>
      <Taskbar />
    </div>
  );
}
